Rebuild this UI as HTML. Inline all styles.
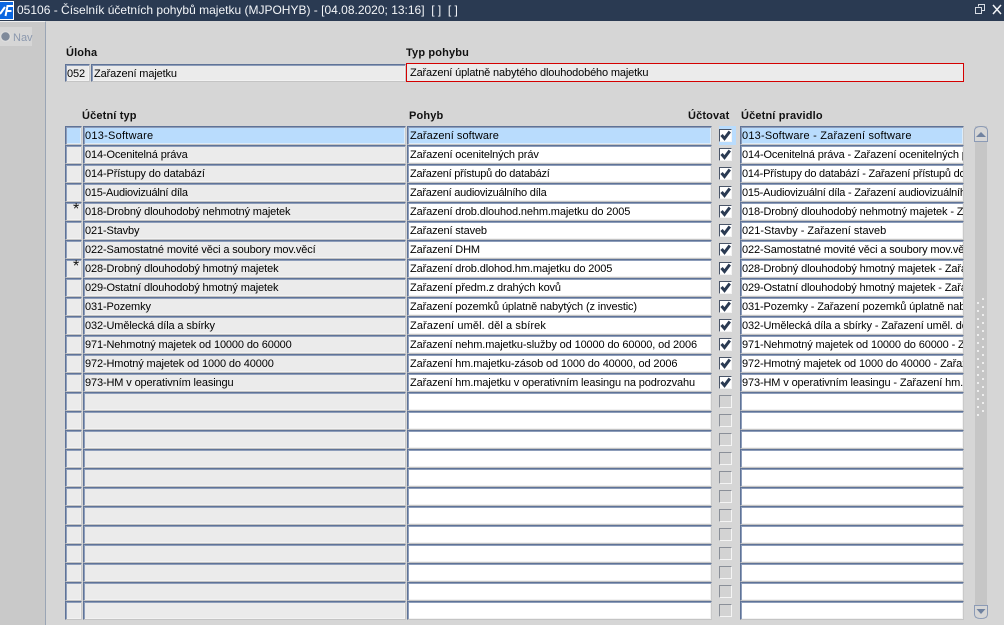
<!DOCTYPE html>
<html lang="cs"><head><meta charset="utf-8"><title>05106</title>
<style>
html,body{margin:0;padding:0;width:1004px;height:625px;overflow:hidden;background:#d6d6d6;font:11px/14px "Liberation Sans",sans-serif;color:#000}
#t{position:absolute;left:0;top:0;width:1004px;height:21px;background:#2a3a52;color:#f4f6f9;font-size:12px;line-height:20px;white-space:pre}
#t span{position:absolute;left:17px;top:0}
#side{position:absolute;left:0;top:21px;width:46px;height:604px;background:#c9c9c9;border-right:1px solid #9aa5b5;border-top:1px solid #f0f0f0;box-sizing:border-box}
#nav{position:absolute;left:0;top:27px;width:32px;height:19px;background:#d6d6d6}
#navt{position:absolute;left:13px;top:31px;color:#8b98ae;font-size:11px}
.l{position:absolute;font-weight:bold;white-space:nowrap;color:#111;letter-spacing:.15px}
.r{position:absolute;left:0;width:1004px;height:19px}
.f{position:absolute;top:0;box-sizing:border-box;height:19px;border-top:1px solid #5f7397;border-left:1px solid #5f7397;border-right:1px solid #c9c9c9;border-bottom:1px solid #c4c4c4;box-shadow:inset 1px 1px 0 #8d9dba,inset -1px -1px 0 #f2f2f2;background:#fff;white-space:nowrap;overflow:hidden;line-height:19px;letter-spacing:-.13px;padding-left:1px}
.a{left:65px;width:17px;background:#ebebeb}
.b{left:83px;width:323px;background:#ebebeb}
.c{left:407px;width:305px;padding-left:2px}
.d{left:740px;width:224px;padding-left:1px}
.s .a,.s .b,.s .c,.s .d{background:#b9dcfd;box-shadow:inset 1px 1px 0 #8d9dba,inset -1px -1px 0 #dcecfb}
.h{position:absolute;left:719px;top:0;width:17px;height:19px;background:#b9dcfd}
.k{position:absolute;left:719px;top:3px;width:11px;height:11px;border-top:1px solid #4a5568;border-left:1px solid #4a5568;border-right:1px solid #f4f4f4;border-bottom:1px solid #f4f4f4;background:#fff}
.e{background:#d3d3d3;border-top-color:#8a8f98;border-left-color:#8a8f98}
.k svg{position:absolute;left:0;top:0}
.st{position:absolute;left:73px;top:0;font-size:16px;line-height:15px;color:#111}
</style></head><body>
<svg width="0" height="0" style="position:absolute"><defs><path id="ck" d="M1.500 5L4.500 8.500L9.800 1.500" fill="none" stroke="#2a3a52" stroke-width="3"/></defs></svg>
<div id="t"><svg style="position:absolute;left:0;top:1px" width="14" height="19"><rect width="14" height="19" fill="#fff"/><rect x="0" y="1" width="13" height="17" fill="#0a66e0"/><path d="M0 13L5 6" stroke="#fff" stroke-width="2"/><path d="M5.500 15L7.500 5H13M6.500 10H11.500" stroke="#fff" stroke-width="2" fill="none"/></svg><span>05106 - Číselník účetních pohybů majetku (MJPOHYB) - [04.08.2020; 13:16]  [ ]  [ ]</span>
<svg style="position:absolute;left:975px;top:4px" width="29" height="12"><path d="M3.500 2.500V0.500H9.500V6.500H7M0.500 3.500H6.500V9.500H0.500Z" fill="none" stroke="#d5dae2"/><path d="M18 1L26 10M26 1L18 10" stroke="#f2f4f7" stroke-width="1.500"/></svg></div>
<div id="side"></div><div id="nav"></div>
<svg style="position:absolute;left:0;top:30px" width="12" height="13"><circle cx="5.500" cy="6.500" r="4.800" fill="#7f8a9b" stroke="#dedede" stroke-width="1.200"/></svg><div id="navt">Nav</div>
<div class="l" style="left:66px;top:46px">Úloha</div>
<div class="l" style="left:406px;top:46px">Typ pohybu</div>
<div class="f" style="left:65px;top:64px;width:25px;background:#ebebeb;height:18px">052</div>
<div class="f" style="left:91px;top:64px;width:315px;background:#ebebeb;height:18px;padding-left:2px">Zařazení majetku</div>
<div style="position:absolute;left:406px;top:63px;width:558px;height:19px;box-sizing:border-box;border:1px solid #d40000;background:#ebebeb;padding-left:3px;line-height:19px;letter-spacing:-.15px">Zařazení úplatně nabytého dlouhodobého majetku</div>
<div class="l" style="left:82px;top:109px">Účetní typ</div>
<div class="l" style="left:409px;top:109px">Pohyb</div>
<div class="l" style="left:688px;top:109px">Účtovat</div>
<div class="l" style="left:741px;top:109px">Účetní pravidlo</div>

<div class="r s" style="top:126px"><div class="f a"></div><div class="f b" style="letter-spacing:.25px">013-Software</div><div class="f c" style="letter-spacing:.05px">Zařazení software</div><div class="h"></div><div class="k"><svg width="11" height="11"><use href="#ck"/></svg></div><div class="f d" style="letter-spacing:.2px">013-Software - Zařazení software</div></div>
<div class="r" style="top:145px"><div class="f a"></div><div class="f b">014-Ocenitelná práva</div><div class="f c">Zařazení ocenitelných práv</div><div class="k"><svg width="11" height="11"><use href="#ck"/></svg></div><div class="f d">014-Ocenitelná práva - Zařazení ocenitelných práv</div></div>
<div class="r" style="top:164px"><div class="f a"></div><div class="f b">014-Přístupy do databází</div><div class="f c" style="letter-spacing:-.25px">Zařazení přístupů do databází</div><div class="k"><svg width="11" height="11"><use href="#ck"/></svg></div><div class="f d" style="letter-spacing:-.23px">014-Přístupy do databází - Zařazení přístupů do databází</div></div>
<div class="r" style="top:183px"><div class="f a"></div><div class="f b" style="letter-spacing:-.25px">015-Audiovizuální díla</div><div class="f c" style="letter-spacing:-.25px">Zařazení audiovizuálního díla</div><div class="k"><svg width="11" height="11"><use href="#ck"/></svg></div><div class="f d" style="letter-spacing:-.23px">015-Audiovizuální díla - Zařazení audiovizuálního díla</div></div>
<div class="r" style="top:202px"><div class="f a"></div><div class="st">*</div><div class="f b">018-Drobný dlouhodobý nehmotný majetek</div><div class="f c">Zařazení drob.dlouhod.nehm.majetku do 2005</div><div class="k"><svg width="11" height="11"><use href="#ck"/></svg></div><div class="f d">018-Drobný dlouhodobý nehmotný majetek - Zařazení drob.</div></div>
<div class="r" style="top:221px"><div class="f a"></div><div class="f b">021-Stavby</div><div class="f c">Zařazení staveb</div><div class="k"><svg width="11" height="11"><use href="#ck"/></svg></div><div class="f d" style="letter-spacing:0">021-Stavby - Zařazení staveb</div></div>
<div class="r" style="top:240px"><div class="f a"></div><div class="f b">022-Samostatné movité věci a soubory mov.věcí</div><div class="f c">Zařazení DHM</div><div class="k"><svg width="11" height="11"><use href="#ck"/></svg></div><div class="f d">022-Samostatné movité věci a soubory mov.věcí - Zařazení DHM</div></div>
<div class="r" style="top:259px"><div class="f a"></div><div class="st">*</div><div class="f b">028-Drobný dlouhodobý hmotný majetek</div><div class="f c">Zařazení drob.dlohod.hm.majetku do 2005</div><div class="k"><svg width="11" height="11"><use href="#ck"/></svg></div><div class="f d">028-Drobný dlouhodobý hmotný majetek - Zařazení drob.</div></div>
<div class="r" style="top:278px"><div class="f a"></div><div class="f b">029-Ostatní dlouhodobý hmotný majetek</div><div class="f c">Zařazení předm.z drahých kovů</div><div class="k"><svg width="11" height="11"><use href="#ck"/></svg></div><div class="f d">029-Ostatní dlouhodobý hmotný majetek - Zařazení předm.</div></div>
<div class="r" style="top:297px"><div class="f a"></div><div class="f b">031-Pozemky</div><div class="f c">Zařazení pozemků úplatně nabytých (z investic)</div><div class="k"><svg width="11" height="11"><use href="#ck"/></svg></div><div class="f d">031-Pozemky - Zařazení pozemků úplatně nabytých (z investic)</div></div>
<div class="r" style="top:316px"><div class="f a"></div><div class="f b">032-Umělecká díla a sbírky</div><div class="f c" style="letter-spacing:.1px">Zařazení uměl. děl a sbírek</div><div class="k"><svg width="11" height="11"><use href="#ck"/></svg></div><div class="f d">032-Umělecká díla a sbírky - Zařazení uměl. děl a sbírek</div></div>
<div class="r" style="top:335px"><div class="f a"></div><div class="f b">971-Nehmotný majetek od 10000 do 60000</div><div class="f c">Zařazení nehm.majetku-služby od 10000 do 60000, od 2006</div><div class="k"><svg width="11" height="11"><use href="#ck"/></svg></div><div class="f d">971-Nehmotný majetek od 10000 do 60000 - Zařazení nehm.</div></div>
<div class="r" style="top:354px"><div class="f a"></div><div class="f b">972-Hmotný majetek od 1000 do 40000</div><div class="f c">Zařazení hm.majetku-zásob od 1000 do 40000, od 2006</div><div class="k"><svg width="11" height="11"><use href="#ck"/></svg></div><div class="f d">972-Hmotný majetek od 1000 do 40000 - Zařazení hm.</div></div>
<div class="r" style="top:373px"><div class="f a"></div><div class="f b">973-HM v operativním leasingu</div><div class="f c">Zařazení hm.majetku v operativním leasingu na podrozvahu</div><div class="k"><svg width="11" height="11"><use href="#ck"/></svg></div><div class="f d">973-HM v operativním leasingu - Zařazení hm.majetku</div></div>
<div class="r" style="top:392px"><div class="f a"></div><div class="f b"></div><div class="f c"></div><div class="k e"></div><div class="f d"></div></div>
<div class="r" style="top:411px"><div class="f a"></div><div class="f b"></div><div class="f c"></div><div class="k e"></div><div class="f d"></div></div>
<div class="r" style="top:430px"><div class="f a"></div><div class="f b"></div><div class="f c"></div><div class="k e"></div><div class="f d"></div></div>
<div class="r" style="top:449px"><div class="f a"></div><div class="f b"></div><div class="f c"></div><div class="k e"></div><div class="f d"></div></div>
<div class="r" style="top:468px"><div class="f a"></div><div class="f b"></div><div class="f c"></div><div class="k e"></div><div class="f d"></div></div>
<div class="r" style="top:487px"><div class="f a"></div><div class="f b"></div><div class="f c"></div><div class="k e"></div><div class="f d"></div></div>
<div class="r" style="top:506px"><div class="f a"></div><div class="f b"></div><div class="f c"></div><div class="k e"></div><div class="f d"></div></div>
<div class="r" style="top:525px"><div class="f a"></div><div class="f b"></div><div class="f c"></div><div class="k e"></div><div class="f d"></div></div>
<div class="r" style="top:544px"><div class="f a"></div><div class="f b"></div><div class="f c"></div><div class="k e"></div><div class="f d"></div></div>
<div class="r" style="top:563px"><div class="f a"></div><div class="f b"></div><div class="f c"></div><div class="k e"></div><div class="f d"></div></div>
<div class="r" style="top:582px"><div class="f a"></div><div class="f b"></div><div class="f c"></div><div class="k e"></div><div class="f d"></div></div>
<div class="r" style="top:601px"><div class="f a"></div><div class="f b"></div><div class="f c"></div><div class="k e"></div><div class="f d"></div></div>

<svg style="position:absolute;left:973px;top:124px" width="17" height="498">
<rect x="2" y="2" width="12" height="492" fill="#c6c6c6"/>
<path d="M1.500 17.500V7Q1.500 2.500 8 2.500Q14.500 2.500 14.500 7V17.500Z" fill="#d6d6d6" stroke="#8c9bb6"/>
<path d="M3 13L8 8L13 13Z" fill="#7082a0"/>
<path d="M1.500 481.500V490Q1.500 494.500 8 494.500Q14.500 494.500 14.500 490V481.500Z" fill="#d6d6d6" stroke="#8c9bb6"/>
<path d="M3.500 485L12.500 485L8 490Z" fill="#7082a0"/>
<g fill="#eeeeee"><rect x="4" y="178" width="2" height="2"/><rect x="9" y="174" width="2" height="2"/><rect x="4" y="186" width="2" height="2"/><rect x="9" y="182" width="2" height="2"/><rect x="4" y="194" width="2" height="2"/><rect x="9" y="190" width="2" height="2"/><rect x="4" y="202" width="2" height="2"/><rect x="9" y="198" width="2" height="2"/><rect x="4" y="210" width="2" height="2"/><rect x="9" y="206" width="2" height="2"/><rect x="4" y="218" width="2" height="2"/><rect x="9" y="214" width="2" height="2"/><rect x="4" y="226" width="2" height="2"/><rect x="9" y="222" width="2" height="2"/><rect x="4" y="234" width="2" height="2"/><rect x="9" y="230" width="2" height="2"/><rect x="4" y="242" width="2" height="2"/><rect x="9" y="238" width="2" height="2"/><rect x="4" y="250" width="2" height="2"/><rect x="9" y="246" width="2" height="2"/><rect x="4" y="258" width="2" height="2"/><rect x="9" y="254" width="2" height="2"/><rect x="4" y="266" width="2" height="2"/><rect x="9" y="262" width="2" height="2"/><rect x="4" y="274" width="2" height="2"/><rect x="9" y="270" width="2" height="2"/><rect x="4" y="282" width="2" height="2"/><rect x="9" y="278" width="2" height="2"/><rect x="4" y="290" width="2" height="2"/><rect x="9" y="286" width="2" height="2"/></g>
</svg>
</body></html>
